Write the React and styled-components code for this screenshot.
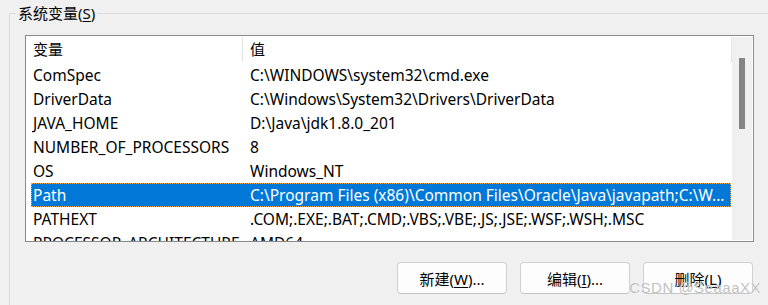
import styled, { createGlobalStyle } from "styled-components";

const GlobalStyle = createGlobalStyle`
  html, body {
    margin: 0;
    padding: 0;
    background: #f0f0f0;
  }
  body {
    font-family: "Noto Sans", "Noto Sans CJK SC", sans-serif;
    font-size: 15px;
    color: #000;
  }
`;

const Page = styled.div`
  position: relative;
  width: 768px;
  height: 305px;
  padding-top: 3px;
  box-sizing: border-box;
  overflow: hidden;
`;

const Group = styled.fieldset`
  margin: 0 0 0 9px;
  padding: 0 14px 0 15px;
  height: 302px;
  box-sizing: border-box;
  min-width: 0;
  border: 1px solid #dcdcdc;
  border-right: none;
  border-bottom: none;
`;

const Legend = styled.legend`
  margin-left: -9px;
  padding: 0 2px;
  line-height: 20px;
  height: 20px;
`;

const Key = styled.span`
  text-decoration: underline;
  text-underline-offset: 2px;
`;

const ListBox = styled.div`
  margin-top: 12px;
  height: 207px;
  box-sizing: border-box;
  border: 1px solid #8a8a8a;
  background: #fff;
  display: flex;
  padding: 0 1px 0 0;
  overflow: hidden;
`;

const Table = styled.div`
  flex: 1;
  overflow: hidden;
  font-size: 15.5px;
`;

const HeaderRow = styled.div`
  display: flex;
  height: 27px;
  align-items: stretch;
`;

const HeaderCell = styled.div`
  width: ${(p) => p.width || "auto"};
  flex: ${(p) => (p.width ? "none" : 1)};
  padding-left: 7px;
  box-sizing: border-box;
  margin-top: 1px;
  margin-bottom: 1px;
  border-right: 1px solid #e5e5e5;
  display: flex;
  align-items: center;
  line-height: 1;
  font-size: 15px;
`;

const Row = styled.div`
  display: flex;
  align-items: center;
  height: 24px;
  margin: 0 1px 0 5px;
  box-sizing: border-box;
  white-space: nowrap;
  background: ${(p) => (p.selected ? "#0078d7" : "transparent")};
  color: ${(p) => (p.selected ? "#fff" : "#000")};
  border: 1px dotted ${(p) => (p.selected ? "#f0a848" : "transparent")};
`;

const Cell = styled.div`
  width: ${(p) => p.width || "auto"};
  flex: ${(p) => (p.width ? "none" : 1)};
  padding-left: 1px;
  box-sizing: border-box;
  overflow: hidden;
`;

const ScrollTrack = styled.div`
  width: 20px;
  margin: 1px 0;
  background: #f0f0f0;
  position: relative;
`;

const Thumb = styled.div`
  position: absolute;
  left: 7px;
  top: 21px;
  width: 6px;
  height: 71px;
  background: #858585;
`;

const Buttons = styled.div`
  display: flex;
  justify-content: flex-end;
  gap: 13px;
  margin-top: 20px;
  padding-right: 1px;
`;

const Button = styled.button`
  width: 110px;
  height: 32px;
  font: inherit;
  color: #000;
  background: #fdfdfd;
  border: 1px solid #d0d0d0;
  border-bottom-color: #c4c4c4;
  border-radius: 4px;
  padding: 0;
`;

const Watermark = styled.div`
  position: absolute;
  right: 7px;
  bottom: 9px;
  font-family: "Liberation Sans", Arial, sans-serif;
  font-size: 15px;
  letter-spacing: 0.5px;
  color: rgba(165, 165, 165, 0.7);
  text-shadow: 0 0 1px #fff;
  pointer-events: none;
`;

const vars = [
  ["ComSpec", "C:\\WINDOWS\\system32\\cmd.exe"],
  ["DriverData", "C:\\Windows\\System32\\Drivers\\DriverData"],
  ["JAVA_HOME", "D:\\Java\\jdk1.8.0_201"],
  ["NUMBER_OF_PROCESSORS", "8"],
  ["OS", "Windows_NT"],
  ["Path", "C:\\Program Files (x86)\\Common Files\\Oracle\\Java\\javapath;C:\\W..."],
  ["PATHEXT", ".COM;.EXE;.BAT;.CMD;.VBS;.VBE;.JS;.JSE;.WSF;.WSH;.MSC"],
  ["PROCESSOR_ARCHITECTURE", "AMD64"],
];

export default function App() {
  return (
    <>
      <GlobalStyle />
      <Page>
        <Group>
          <Legend>
            系统变量(<Key>S</Key>)
          </Legend>
          <ListBox>
            <Table>
              <HeaderRow>
                <HeaderCell width="217px">变量</HeaderCell>
                <HeaderCell>值</HeaderCell>
              </HeaderRow>
              {vars.map(([name, value]) => (
                <Row key={name} selected={name === "Path"}>
                  <Cell width="217px">{name}</Cell>
                  <Cell>{value}</Cell>
                </Row>
              ))}
            </Table>
            <ScrollTrack>
              <Thumb />
            </ScrollTrack>
          </ListBox>
          <Buttons>
            <Button>
              新建(<Key>W</Key>)...
            </Button>
            <Button>
              编辑(<Key>I</Key>)...
            </Button>
            <Button>
              删除(<Key>L</Key>)
            </Button>
          </Buttons>
        </Group>
        <Watermark>CSDN @SeaaaXX</Watermark>
      </Page>
    </>
  );
}
